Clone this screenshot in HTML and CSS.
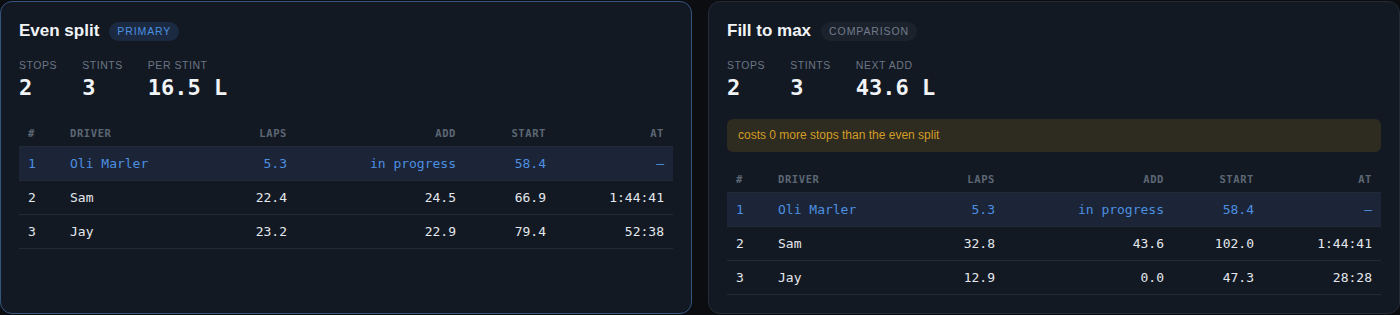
FILE: index.html
```html
<!DOCTYPE html>
<html lang="en">
<head>
    <meta charset="UTF-8">
    <meta name="viewport" content="width=device-width, initial-scale=1.0">
    <title>Fuel strategy</title>
    <link rel="stylesheet" href="styles.css">
</head>
<body>

    <div class="plans">
        <!-- Plan principal -->
        <div class="plan plan-primary">
            <div class="plan-header">
                <h2>Even split</h2>
                <span class="badge badge-primary">Primary</span>
            </div>

            <div class="stats">
                <div class="stat">
                    <div class="stat-label">Stops</div>
                    <div class="stat-value">2</div>
                </div>
                <div class="stat">
                    <div class="stat-label">Stints</div>
                    <div class="stat-value">3</div>
                </div>
                <div class="stat">
                    <div class="stat-label">Per stint</div>
                    <div class="stat-value">16.5 L</div>
                </div>
            </div>

            <table class="stints">
                <colgroup>
                    <col class="col-num"><col class="col-driver"><col class="col-laps">
                    <col class="col-add"><col class="col-start"><col class="col-at">
                </colgroup>
                <thead>
                    <tr>
                        <th>#</th>
                        <th>Driver</th>
                        <th class="num">Laps</th>
                        <th class="num">Add</th>
                        <th class="num">Start</th>
                        <th class="num">At</th>
                    </tr>
                </thead>
                <tbody>
                    <tr class="current">
                        <td>1</td>
                        <td>Oli Marler</td>
                        <td class="num">5.3</td>
                        <td class="num">in progress</td>
                        <td class="num">58.4</td>
                        <td class="num">—</td>
                    </tr>
                    <tr>
                        <td>2</td>
                        <td>Sam</td>
                        <td class="num">22.4</td>
                        <td class="num">24.5</td>
                        <td class="num">66.9</td>
                        <td class="num">1:44:41</td>
                    </tr>
                    <tr>
                        <td>3</td>
                        <td>Jay</td>
                        <td class="num">23.2</td>
                        <td class="num">22.9</td>
                        <td class="num">79.4</td>
                        <td class="num">52:38</td>
                    </tr>
                </tbody>
            </table>
        </div>

        <!-- Plan de comparaison -->
        <div class="plan">
            <div class="plan-header">
                <h2>Fill to max</h2>
                <span class="badge badge-compare">Comparison</span>
            </div>

            <div class="stats">
                <div class="stat">
                    <div class="stat-label">Stops</div>
                    <div class="stat-value">2</div>
                </div>
                <div class="stat">
                    <div class="stat-label">Stints</div>
                    <div class="stat-value">3</div>
                </div>
                <div class="stat">
                    <div class="stat-label">Next add</div>
                    <div class="stat-value">43.6 L</div>
                </div>
            </div>

            <div class="notice">costs 0 more stops than the even split</div>

            <table class="stints">
                <colgroup>
                    <col class="col-num"><col class="col-driver"><col class="col-laps">
                    <col class="col-add"><col class="col-start"><col class="col-at">
                </colgroup>
                <thead>
                    <tr>
                        <th>#</th>
                        <th>Driver</th>
                        <th class="num">Laps</th>
                        <th class="num">Add</th>
                        <th class="num">Start</th>
                        <th class="num">At</th>
                    </tr>
                </thead>
                <tbody>
                    <tr class="current">
                        <td>1</td>
                        <td>Oli Marler</td>
                        <td class="num">5.3</td>
                        <td class="num">in progress</td>
                        <td class="num">58.4</td>
                        <td class="num">—</td>
                    </tr>
                    <tr>
                        <td>2</td>
                        <td>Sam</td>
                        <td class="num">32.8</td>
                        <td class="num">43.6</td>
                        <td class="num">102.0</td>
                        <td class="num">1:44:41</td>
                    </tr>
                    <tr>
                        <td>3</td>
                        <td>Jay</td>
                        <td class="num">12.9</td>
                        <td class="num">0.0</td>
                        <td class="num">47.3</td>
                        <td class="num">28:28</td>
                    </tr>
                </tbody>
            </table>
        </div>
    </div>

</body>
</html>
```

FILE: styles.css
```css
/* Base */
body {
    margin: 0;
    padding: 1px 0 1px 0;
    background-color: #0b0d11;
    color: #e3e8ee;
    font-family: "Liberation Sans", Arial, sans-serif;
}

.plans {
    display: grid;
    grid-template-columns: 1fr 1fr;
    gap: 16px;
}

/* Cartes */
.plan {
    background-color: #131922;
    border: 1px solid #252c37;
    border-radius: 12px;
    padding: 18px;
}

.plan-primary {
    border-color: #35557f;
}

.plan-header {
    display: flex;
    align-items: center;
    gap: 10px;
    height: 22px;
}

.plan-header h2 {
    margin: 0;
    font-size: 17px;
    font-weight: bold;
    color: #f1f4f7;
}

.badge {
    font-size: 10.5px;
    line-height: 11px;
    letter-spacing: 0.9px;
    text-transform: uppercase;
    padding: 4px 8px;
    border-radius: 10px;
}

.badge-primary {
    background-color: #1b2a40;
    color: #4d8fe0;
}

.badge-compare {
    background-color: #1c222c;
    color: #717d8c;
}

/* Statistiques */
.stats {
    display: flex;
    gap: 25px;
    margin-top: 17px;
    margin-bottom: 18px;
}

.stat-label {
    font-size: 10.5px;
    line-height: 12px;
    letter-spacing: 0.55px;
    text-transform: uppercase;
    color: #6b7685;
    margin-bottom: 4px;
}

.stat-value {
    font-family: "DejaVu Sans Mono", monospace;
    font-size: 22px;
    font-weight: bold;
    line-height: 26px;
    color: #f1f4f7;
}

/* Avertissement */
.notice {
    background-color: #2e2b20;
    color: #d39d26;
    font-size: 12px;
    line-height: 15px;
    padding: 9px 11px;
    border-radius: 6px;
    margin-bottom: 13px;
}

/* Tableau des relais */
.stints {
    width: 100%;
    border-collapse: collapse;
    table-layout: fixed;
    font-family: "DejaVu Sans Mono", monospace;
}

.col-num { width: 42px; }
.col-driver { width: 160px; }
.col-laps { width: 75px; }
.col-add { width: 169px; }
.col-start { width: 90px; }
.col-at { width: 118px; }

.stints th {
    height: 27px;
    padding: 0 9px;
    font-size: 10.5px;
    font-weight: bold;
    letter-spacing: 0.6px;
    text-transform: uppercase;
    color: #5c6775;
    text-align: left;
    border-bottom: 1px solid #222a35;
}

.stints td {
    height: 33px;
    padding: 0 9px;
    font-size: 13px;
    color: #e3e8ee;
    border-bottom: 1px solid #222a35;
    white-space: nowrap;
}

.stints .num {
    text-align: right;
}

.stints tr.current td {
    background-color: #1b2537;
    color: #4d8fe0;
}
```
